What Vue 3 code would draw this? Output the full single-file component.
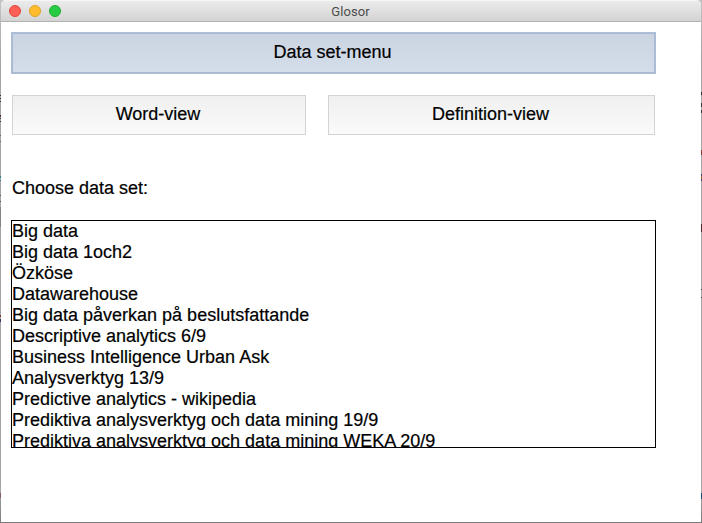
<script setup>
const dataSets = [
  'Big data',
  'Big data 1och2',
  'Özköse',
  'Datawarehouse',
  'Big data påverkan på beslutsfattande',
  'Descriptive analytics 6/9',
  'Business Intelligence Urban Ask',
  'Analysverktyg 13/9',
  'Predictive analytics - wikipedia',
  'Prediktiva analysverktyg och data mining 19/9',
  'Prediktiva analysverktyg och data mining WEKA 20/9',
]
</script>

<template>
  <div class="desktop">
    <main class="window">
      <header class="titlebar">
        <div class="lights">
          <span class="light close"></span>
          <span class="light minimize"></span>
          <span class="light zoom"></span>
        </div>
        <span class="title">Glosor</span>
      </header>
      <div class="content">
        <button class="btn active"><span>Data set-menu</span></button>
        <div class="views">
          <button class="btn"><span>Word-view</span></button>
          <button class="btn"><span>Definition-view</span></button>
        </div>
        <p class="label">Choose data set:</p>
        <ul class="list">
          <li v-for="name in dataSets" :key="name">{{ name }}</li>
        </ul>
      </div>
    </main>
    <i class="edge left"></i>
    <i class="edge right"></i>
  </div>
</template>

<style>
body {
  margin: 0;
  overflow: hidden;
}
</style>

<style scoped>
.desktop {
  position: relative;
  box-sizing: border-box;
  width: 702px;
  height: 523px;
  padding: 0 1px 1px;
  background: linear-gradient(#c4c4c4, #a5a5a5 60px, #a5a5a5 490px, #7c7c7c);
  font-family: "Liberation Sans", Arial, sans-serif;
  color: #000;
}
.window {
  height: 522px;
  background: #fff;
  border-radius: 5px 5px 0 0;
  overflow: hidden;
}
.titlebar {
  box-sizing: border-box;
  display: grid;
  grid-template-columns: 1fr auto 1fr;
  align-items: center;
  height: 22px;
  background: linear-gradient(#ebebeb, #d3d3d3);
  border-top: 1px solid #f5f5f5;
  border-bottom: 1px solid #b1b1b1;
}
.lights {
  display: flex;
  gap: 8px;
  padding-left: 8px;
}
.light {
  box-sizing: border-box;
  width: 12px;
  height: 12px;
  border-radius: 50%;
}
.close {
  background: #ff5f57;
  border: 1px solid #e2463f;
}
.minimize {
  background: #ffbd2e;
  border: 1px solid #dfa023;
}
.zoom {
  background: #27cc44;
  border: 1px solid #1daf30;
}
.title {
  font: 13px/18px Roboto, sans-serif;
  letter-spacing: 0.1px;
  color: #4c4c4c;
  padding-right: 1px;
  margin-top: 1px;
}
.content {
  padding: 10px 45px 0 10px;
  -webkit-text-stroke: 0.2px #000;
}
.btn {
  box-sizing: border-box;
  display: flex;
  justify-content: center;
  align-items: center;
  height: 40px;
  padding: 0 2px 2px 0;
  border: 1px solid #d3d3d3;
  background: linear-gradient(#f0f0f0, #fafafa);
  font: 18px/21px "Liberation Sans", Arial, sans-serif;
  color: #000;
}
.active {
  width: 645px;
  height: 42px;
  border: 1px solid #abbfd8;
  background: linear-gradient(#cad4e0, #d4deea);
  box-shadow: inset 0 0 0 1px #abb8cf;
}
.views {
  display: grid;
  grid-template-columns: 294px 327px;
  column-gap: 22px;
  margin: 21px 0 0 1px;
}
.label {
  margin: 43px 0 0 1px;
  font-size: 18px;
  line-height: 21px;
}
.list {
  box-sizing: border-box;
  width: 645px;
  height: 228px;
  margin: 21px 0 0;
  padding: 0;
  border: 1px solid #000;
  overflow: hidden;
  list-style: none;
  font-size: 18px;
  line-height: 21px;
  white-space: nowrap;
}
/* Slivers of the windows behind, visible along both sides */
.edge {
  position: absolute;
  top: 0;
  width: 1px;
  height: 523px;
}
.left {
  left: 0;
  background:
    linear-gradient(#333, #333) 0 95px / 1px 1px no-repeat,
    linear-gradient(#333, #333) 0 98px / 1px 1px no-repeat,
    linear-gradient(#333, #333) 0 101px / 1px 1px no-repeat,
    linear-gradient(#4d2a3a, #4d2a3a) 0 115px / 1px 2px no-repeat,
    linear-gradient(#333, #333) 0 118px / 1px 1px no-repeat,
    linear-gradient(#333, #333) 0 121px / 1px 1px no-repeat,
    linear-gradient(#6a6a40, #6a6a40) 0 135px / 1px 1px no-repeat,
    linear-gradient(#6a6a40, #6a6a40) 0 141px / 1px 1px no-repeat,
    linear-gradient(#2d8080, #2d8080) 0 176px / 1px 2px no-repeat,
    linear-gradient(#2d8080, #2d8080) 0 180px / 1px 1px no-repeat,
    linear-gradient(#2c6040, #2c6040) 0 195px / 1px 1px no-repeat,
    linear-gradient(#2c6040, #2c6040) 0 201px / 1px 1px no-repeat,
    linear-gradient(#858585, #858585) 0 207px / 1px 20px no-repeat,
    linear-gradient(#7b3535, #7b3535) 0 315px / 1px 2px no-repeat,
    linear-gradient(#333a60, #333a60) 0 319px / 1px 3px no-repeat,
    linear-gradient(#806060, #806060) 0 493px / 1px 5px no-repeat;
}
.right {
  right: 0;
  background:
    linear-gradient(#333, #333) 0 92px / 1px 3px no-repeat,
    linear-gradient(#333, #333) 0 103px / 1px 4px no-repeat,
    linear-gradient(#333, #333) 0 110px / 1px 3px no-repeat,
    linear-gradient(#943b35, #943b35) 0 150px / 1px 5px no-repeat,
    linear-gradient(#473d70, #473d70) 0 174px / 1px 2px no-repeat,
    linear-gradient(#a06030, #a06030) 0 176px / 1px 3px no-repeat,
    linear-gradient(#473d70, #473d70) 0 179px / 1px 2px no-repeat,
    linear-gradient(#53282c, #53282c) 0 224px / 1px 8px no-repeat,
    linear-gradient(#333, #333) 0 289px / 1px 1px no-repeat,
    linear-gradient(#333, #333) 0 297px / 1px 1px no-repeat,
    linear-gradient(#1b5588, #1b5588) 0 493px / 1px 6px no-repeat;
}
</style>
